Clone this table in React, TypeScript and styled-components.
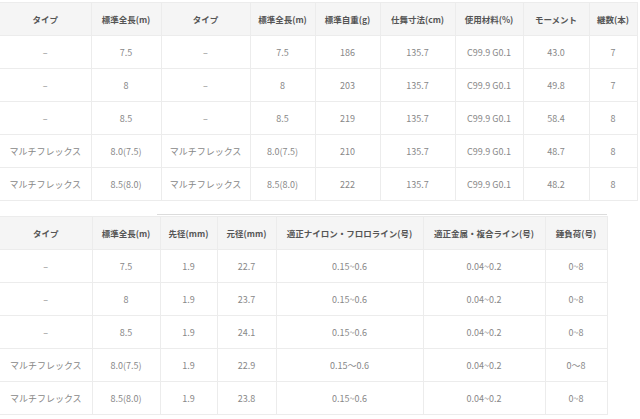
import * as React from 'react';
import styled, { createGlobalStyle } from 'styled-components';

const GlobalStyle = createGlobalStyle`
  html, body {
    margin: 0;
    padding: 0;
    background: #fff;
  }
  body {
    font-family: "Noto Sans CJK JP", "Noto Sans", sans-serif;
  }
`;

const Page = styled.div`
  display: flex;
  flex-direction: column;
  padding-top: 2px;
  width: 640px;
`;

const Table = styled.table<{ $width: number }>`
  border-collapse: collapse;
  table-layout: fixed;
  width: ${p => p.$width}px;
  border-top: 1px solid #ececec;
  border-bottom: 1px solid ${p => (p.$width < 620 ? '#d4d4d4' : '#e6e6e6')};
`;

const HeadCell = styled.th`
  height: 32px;
  padding: 0;
  background: #f5f5f5;
  border: 1px solid #ececec;
  border-top: none;
  color: #555;
  font-size: 8.5px;
  font-weight: 700;
  text-align: center;
  white-space: nowrap;
  &:first-child { border-left: none; }
`;

const Cell = styled.td`
  height: 32px;
  padding: 0;
  border: 1px solid #ececec;
  color: #888;
  font-size: 9px;
  text-align: center;
  white-space: nowrap;
  &:first-child { border-left: none; }
`;

const ScrollEdge = styled.div`
  margin: 13px 0 1px 157px;
  width: 450px;
  border-top: 1px solid #dcdcdc;
`;

const specHead = ['タイプ', '標準全長(m)', 'タイプ', '標準全長(m)', '標準自重(g)', '仕舞寸法(cm)', '使用材料(%)', 'モーメント', '継数(本)'];
const specCols = [91, 70, 89, 65, 65, 75, 68, 66, 48];
const specRows = [
  ['–', '7.5', '–', '7.5', '186', '135.7', 'C99.9 G0.1', '43.0', '7'],
  ['–', '8', '–', '8', '203', '135.7', 'C99.9 G0.1', '49.8', '7'],
  ['–', '8.5', '–', '8.5', '219', '135.7', 'C99.9 G0.1', '58.4', '8'],
  ['マルチフレックス', '8.0(7.5)', 'マルチフレックス', '8.0(7.5)', '210', '135.7', 'C99.9 G0.1', '48.7', '8'],
  ['マルチフレックス', '8.5(8.0)', 'マルチフレックス', '8.5(8.0)', '222', '135.7', 'C99.9 G0.1', '48.2', '8'],
];

const lineHead = ['タイプ', '標準全長(m)', '先径(mm)', '元径(mm)', '適正ナイロン・フロロライン(号)', '適正金属・複合ライン(号)', '錘負荷(号)'];
const lineCols = [92, 68, 57, 59, 147, 122, 62];
const lineRows = [
  ['–', '7.5', '1.9', '22.7', '0.15~0.6', '0.04~0.2', '0~8'],
  ['–', '8', '1.9', '23.7', '0.15~0.6', '0.04~0.2', '0~8'],
  ['–', '8.5', '1.9', '24.1', '0.15~0.6', '0.04~0.2', '0~8'],
  ['マルチフレックス', '8.0(7.5)', '1.9', '22.9', '0.15～0.6', '0.04~0.2', '0～8'],
  ['マルチフレックス', '8.5(8.0)', '1.9', '23.8', '0.15~0.6', '0.04~0.2', '0~8'],
];

interface SpecTableProps {
  head: string[];
  cols: number[];
  rows: string[][];
}

const SpecTable = ({ head, cols, rows }: SpecTableProps) => (
  <Table $width={cols.reduce((a, b) => a + b, 0)}>
    <colgroup>
      {cols.map((w, i) => (
        <col key={i} style={{ width: w }} />
      ))}
    </colgroup>
    <thead>
      <tr>
        {head.map((h, i) => (
          <HeadCell key={i}>{h}</HeadCell>
        ))}
      </tr>
    </thead>
    <tbody>
      {rows.map((row, r) => (
        <tr key={r}>
          {row.map((v, i) => (
            <Cell key={i}>{v}</Cell>
          ))}
        </tr>
      ))}
    </tbody>
  </Table>
);

const App = () => (
  <Page>
    <GlobalStyle />
    <SpecTable head={specHead} cols={specCols} rows={specRows} />
    <ScrollEdge />
    <SpecTable head={lineHead} cols={lineCols} rows={lineRows} />
  </Page>
);

export default App;
